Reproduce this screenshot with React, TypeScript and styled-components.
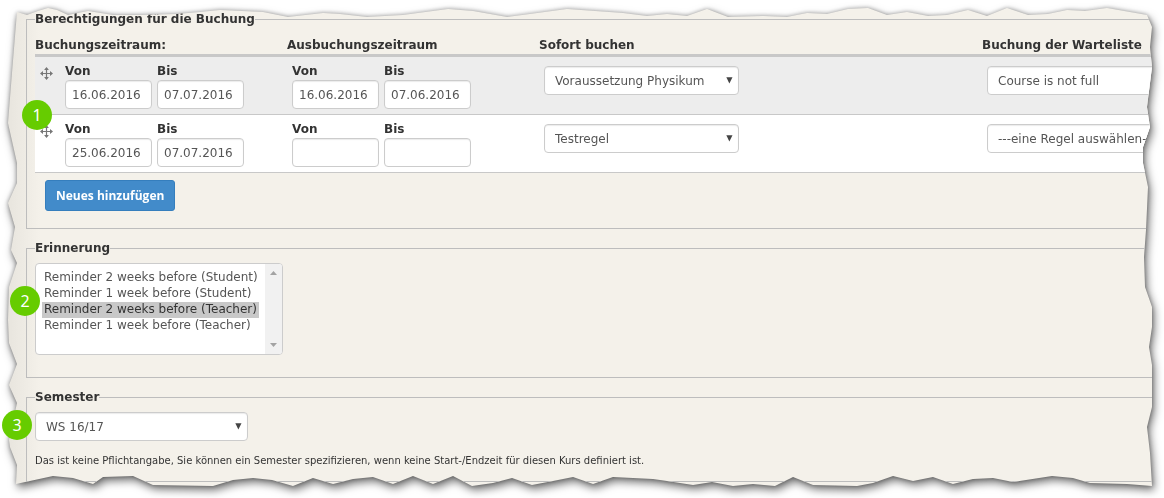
import React from 'react';
import styled, { createGlobalStyle } from 'styled-components';

const GlobalStyle = createGlobalStyle`
  *, *::before, *::after { box-sizing: border-box; }
  body {
    margin: 0;
    background: #fff;
    color: #333;
    font: 12px/16px "DejaVu Sans", Verdana, sans-serif;
  }
`;

/* Torn outline. Along the top and bottom x is a share of the width,
   along the sides it is a distance from the nearer edge. */
const WIDTH = 1164;
const HEIGHT = 498;
const topEdge = [[17, 12], [27, 15], [38, 11], [48, 8], [57, 10], [68, 15], [88, 11], [113, 15], [140, 15], [177, 14], [200, 12], [220, 10], [263, 12], [288, 17], [323, 13], [340, 14], [367, 17], [403, 15], [448, 9], [473, 11], [507, 17], [530, 14], [567, 9], [623, 13], [647, 16], [667, 14], [687, 16], [707, 9], [728, 17], [763, 16], [787, 17], [807, 13], [827, 14], [848, 9], [868, 8], [887, 15], [907, 12], [928, 16], [947, 15], [968, 10], [987, 16], [1007, 8], [1028, 15], [1048, 14], [1067, 10], [1085, 11], [1107, 8]];
const rightEdge = [[1147, 15], [1152, 27], [1150, 47], [1152, 67], [1147, 107], [1150, 127], [1143, 147], [1143, 163], [1148, 187], [1146, 230], [1144, 257], [1145, 287], [1152, 307], [1152, 327], [1149, 347], [1152, 365], [1152, 387], [1152, 407], [1147, 427], [1150, 453], [1152, 486]];
const bottomEdge = [[1127, 484], [1090, 483], [1073, 478], [1052, 476], [1013, 482], [993, 478], [973, 479], [953, 484], [933, 477], [913, 481], [893, 476], [873, 483], [857, 486], [813, 485], [793, 477], [775, 486], [753, 484], [733, 486], [712, 482], [693, 485], [667, 481], [653, 479], [613, 477], [593, 484], [573, 477], [553, 481], [532, 485], [512, 478], [493, 483], [472, 486], [453, 476], [433, 484], [413, 476], [393, 484], [373, 477], [353, 479], [333, 484], [313, 478], [293, 486], [272, 480], [253, 478], [233, 480], [213, 486], [153, 485], [133, 476], [103, 477], [93, 484], [73, 478], [53, 476]];
const leftEdge = [[16, 484], [17, 465], [10, 447], [9, 440], [17, 403], [9, 385], [17, 364], [9, 343], [8, 320], [9, 287], [17, 263], [11, 250], [15, 227], [8, 203], [17, 183], [17, 163], [8, 123], [12, 73]];

const share = (x: number) => `${((x / WIDTH) * 100).toFixed(2)}%`;
const outline = [
  ...topEdge.map(([x, y]) => `${share(x)} ${y}px`),
  ...rightEdge.map(([x, y]) => `calc(100% - ${WIDTH - x}px) ${y}px`),
  ...bottomEdge.map(([x, y]) => `${share(x)} calc(100% - ${HEIGHT - y}px)`),
  ...leftEdge.map(([x, y]) => `${x}px ${y}px`),
].join(', ');

const Stage = styled.main`
  position: relative;
  overflow: hidden;
`;

const Shadow = styled.div`
  filter: drop-shadow(0 0 2px rgba(0, 0, 0, 0.3)) drop-shadow(2px 4px 4px rgba(0, 0, 0, 0.55));
`;

const Paper = styled.div`
  padding: 11px 0 5px 26px;
  overflow: hidden;
  background: linear-gradient(90deg, #e8e5de 8px, #f4f1ea 40px);
  clip-path: polygon(${outline});
`;

const Group = styled.fieldset<{ $bottom: number }>`
  min-width: 0;
  margin: 0 0 11px;
  padding: 0 0 ${(p) => p.$bottom}px 8px;
  border: 1px solid #bdbdbd;
  border-right: 0;
`;

const Legend = styled.legend`
  padding: 0;
  font-weight: bold;
`;

const RuleTable = styled.table`
  width: 100%;
  table-layout: fixed;
  border-collapse: separate;
  border-spacing: 0;
`;

const Head = styled.th<{ $width?: number }>`
  width: ${(p) => (p.$width ? `${p.$width}px` : 'auto')};
  padding: 10px 0 1px;
  border-bottom: 3px solid #c8c8c8;
  text-align: left;
  white-space: nowrap;
`;

const Row = styled.tr<{ $shaded?: boolean }>`
  background: ${(p) => (p.$shaded ? '#ededed' : '#fff')};
`;

const Cell = styled.td`
  height: 58px;
  padding: 5px 5px 0;
  border-bottom: 1px solid #c8c8c8;
  vertical-align: top;
`;

const Fields = styled.div`
  display: flex;
  gap: 5px;
`;

const Handle = styled.span`
  width: 20px;
  padding: 5px 0 0;
  svg { display: block; }
`;

const Field = styled.label`
  display: flex;
  flex-direction: column;
  width: 87px;
  padding-top: 1px;
  line-height: 17px;
  font-weight: bold;
`;

const controlLook = `
  height: 29px;
  border: 1px solid #ccc;
  border-radius: 4px;
  background: #fff;
  box-shadow: inset 0 1px 1px rgba(0, 0, 0, 0.08);
  color: #555;
`;

const DateInput = styled.input`
  ${controlLook}
  width: 100%;
  padding: 0 6px;
  font: 12px "DejaVu Sans", Verdana, sans-serif;
`;

const SelectBox = styled.div<{ $width: number; $top: number }>`
  position: relative;
  width: ${(p) => p.$width}px;
  margin-top: ${(p) => p.$top}px;
  svg {
    position: absolute;
    top: 11px;
    right: 6px;
    pointer-events: none;
  }
`;

const Select = styled.select`
  ${controlLook}
  display: block;
  width: 100%;
  padding: 0 20px 0 10px;
  appearance: none;
  font: 12px "DejaVu Sans", Verdana, sans-serif;
`;

const AddButton = styled.button`
  display: block;
  height: 31px;
  margin: 7px 0 0 10px;
  padding: 0 10px;
  border: 1px solid #357ebd;
  border-radius: 3px;
  background: #428bca;
  color: #fff;
  font: bold 12px "Open Sans", Tahoma, sans-serif;
`;

const ListFrame = styled.div`
  display: flex;
  width: 248px;
  height: 92px;
  margin-top: 7px;
  overflow: hidden;
  border: 1px solid #ccc;
  border-radius: 4px;
  background: #fff;
`;

const List = styled.select`
  flex: 1;
  min-width: 0;
  padding: 6px 6px 2px;
  border: 0;
  outline: 0;
  overflow: hidden;
  background: transparent;
  color: #555;
  font: 12px/16px "DejaVu Sans", Verdana, sans-serif;
  option {
    min-height: 16px;
    padding: 0 2px;
    line-height: 16px;
  }
  option:checked {
    background: #c8c8c8 linear-gradient(#c8c8c8, #c8c8c8);
    color: #333;
  }
`;

const ScrollTrack = styled.div`
  display: flex;
  flex-direction: column;
  align-items: center;
  justify-content: space-between;
  width: 17px;
  padding: 7px 0;
  background: #f1f1f1;
`;

const Hint = styled.p`
  margin: 12px 0 0;
  font-size: 10px;
`;

const Badge = styled.span<{ $x: number; $y: number }>`
  position: absolute;
  left: ${(p) => p.$x}px;
  top: ${(p) => p.$y}px;
  width: 30px;
  border-radius: 50%;
  background: #6c0;
  color: #fff;
  font: 16px/30px "Noto Sans", sans-serif;
  text-align: center;
`;

const MoveIcon = () => (
  <svg width="13" height="13" viewBox="0 0 13 13" aria-hidden="true">
    <path d="M6.5 1v11M1 6.5h11" fill="none" stroke="#777" strokeWidth="1.2" />
    <path d="M6.5 0l2.4 3H4.1zM6.5 13l2.4-3H4.1zM0 6.5l3-2.4v4.8zM13 6.5l-3-2.4v4.8z" fill="#777" />
  </svg>
);

const DownArrow = () => (
  <svg width="7" height="7" viewBox="0 0 7 7" aria-hidden="true">
    <path d="M0.3 0.3h6.2L3.4 6.5z" fill="#444" />
  </svg>
);

const ScrollArrow = ({ up }: { up?: boolean }) => (
  <svg width="7" height="4" viewBox="0 0 7 4" aria-hidden="true">
    <path d={up ? 'M0 4L3.5 0 7 4z' : 'M0 0h7L3.5 4z'} fill="#a3a3a3" />
  </svg>
);

const DateRange = ({ from, to }: { from: string; to: string }) => (
  <>
    <Field>Von<DateInput type="text" defaultValue={from} /></Field>
    <Field>Bis<DateInput type="text" defaultValue={to} /></Field>
  </>
);

const Choice = ({ label, value, width, top }: { label: string; value: string; width: number; top: number }) => (
  <SelectBox $width={width} $top={top}>
    <Select aria-label={label} defaultValue={value}>
      <option>{value}</option>
    </Select>
    <DownArrow />
  </SelectBox>
);

const rules = [
  { book: ['16.06.2016', '07.07.2016'], cancel: ['16.06.2016', '07.06.2016'], direct: 'Voraussetzung Physikum', waiting: 'Course is not full' },
  { book: ['25.06.2016', '07.07.2016'], cancel: ['', ''], direct: 'Testregel', waiting: '---eine Regel auswählen---' },
];

const reminders = [
  'Reminder 2 weeks before (Student)',
  'Reminder 1 week before (Student)',
  'Reminder 2 weeks before (Teacher)',
  'Reminder 1 week before (Teacher)',
];

export default function App() {
  return (
    <Stage>
      <GlobalStyle />
      <Shadow>
        <Paper>
          <Group $bottom={17}>
            <Legend>Berechtigungen für die Buchung</Legend>
            <RuleTable>
              <thead>
                <tr>
                  <Head $width={252}>Buchungszeitraum:</Head>
                  <Head $width={252}>Ausbuchungszeitraum</Head>
                  <Head $width={443}>Sofort buchen</Head>
                  <Head>Buchung der Warteliste</Head>
                </tr>
              </thead>
              <tbody>
                {rules.map((rule, i) => (
                  <Row key={i} $shaded={i % 2 === 0}>
                    <Cell>
                      <Fields>
                        <Handle><MoveIcon /></Handle>
                        <DateRange from={rule.book[0]} to={rule.book[1]} />
                      </Fields>
                    </Cell>
                    <Cell>
                      <Fields>
                        <DateRange from={rule.cancel[0]} to={rule.cancel[1]} />
                      </Fields>
                    </Cell>
                    <Cell><Choice label="Sofort buchen" value={rule.direct} width={195} top={4} /></Cell>
                    <Cell><Choice label="Buchung der Warteliste" value={rule.waiting} width={195} top={4} /></Cell>
                  </Row>
                ))}
              </tbody>
            </RuleTable>
            <AddButton type="button">Neues hinzufügen</AddButton>
          </Group>
          <Group $bottom={22}>
            <Legend>Erinnerung</Legend>
            <ListFrame>
              <List multiple size={5} aria-label="Erinnerung" defaultValue={[reminders[2]]}>
                {reminders.map((text) => <option key={text}>{text}</option>)}
              </List>
              <ScrollTrack><ScrollArrow up /><ScrollArrow /></ScrollTrack>
            </ListFrame>
          </Group>
          <Group $bottom={12}>
            <Legend>Semester</Legend>
            <Choice label="Semester" value="WS 16/17" width={213} top={7} />
            <Hint>Das ist keine Pflichtangabe, Sie können ein Semester spezifizieren, wenn keine Start-/Endzeit für diesen Kurs definiert ist.</Hint>
          </Group>
        </Paper>
      </Shadow>
      <Badge $x={22} $y={100}>1</Badge>
      <Badge $x={10} $y={286}>2</Badge>
      <Badge $x={2} $y={410}>3</Badge>
    </Stage>
  );
}
